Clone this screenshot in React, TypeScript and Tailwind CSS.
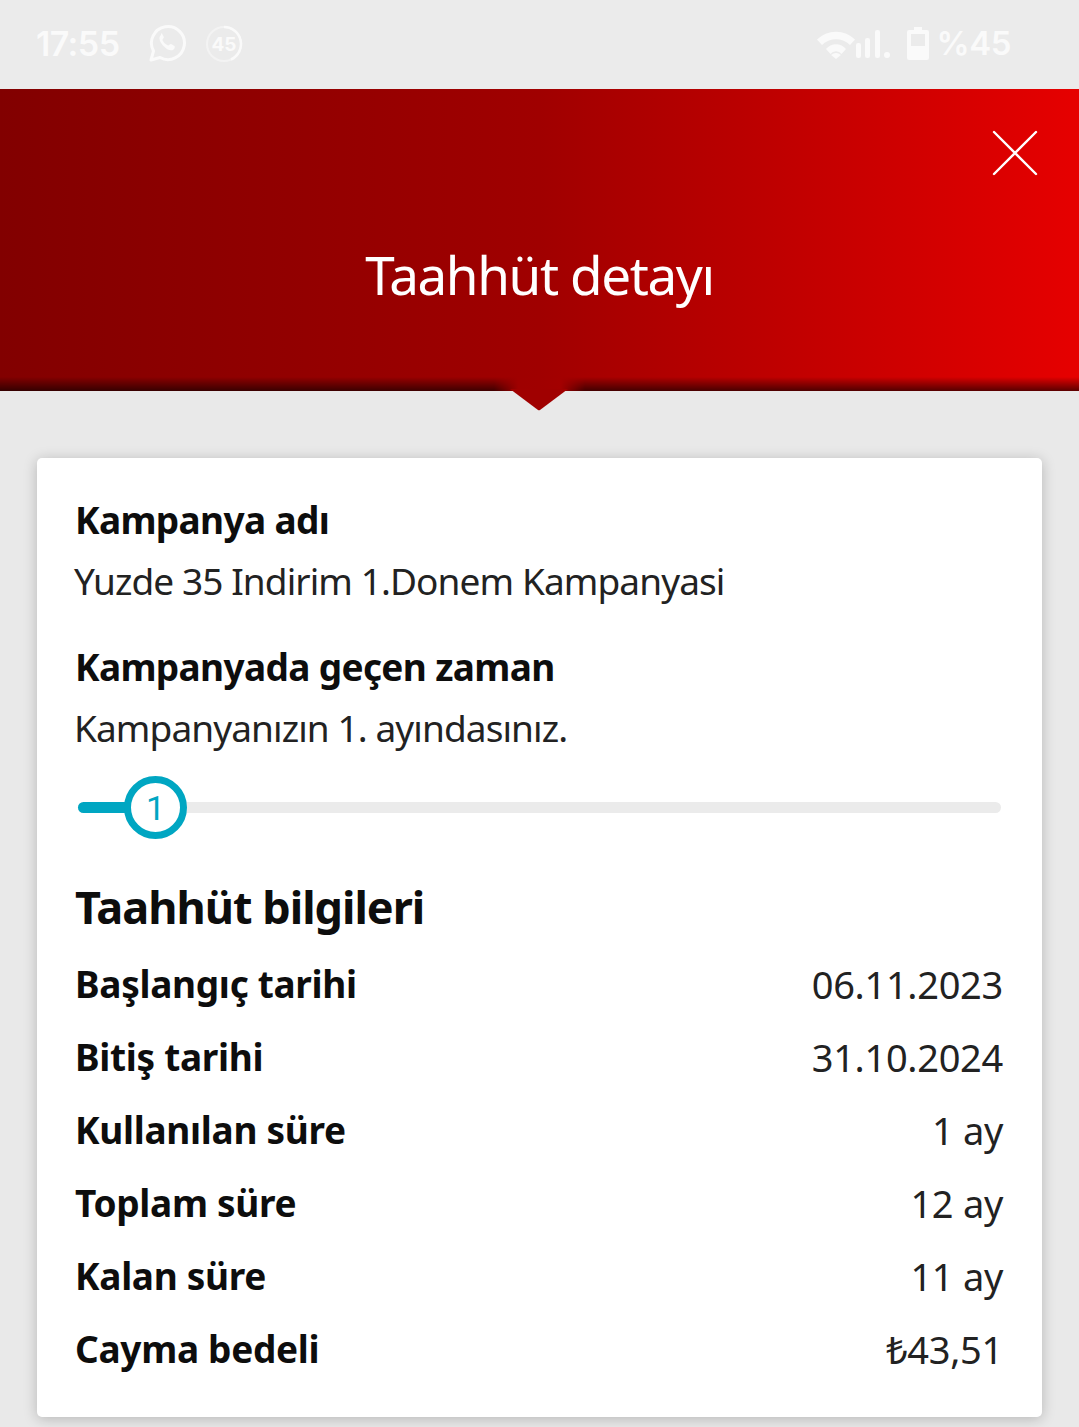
const font = "font-['Noto_Sans','Open_Sans',sans-serif]";
const bold37 = "flex h-[46px] items-center text-[37px] font-bold leading-none tracking-[-0.65px] text-[#0d0d0d]";
const reg37 = "-ml-px flex h-[46px] items-center text-[37px] leading-none tracking-[-0.9px] text-[#222]";

function Row({ label, value }: { label: string; value: string }) {
  return (
    <div className="flex h-[73px] items-center justify-between">
      <span className="text-[37px] font-bold leading-none tracking-[-0.3px] text-[#0d0d0d]">{label}</span>
      <span className="text-[38px] leading-none tracking-[-0.3px] text-[#222]">{value}</span>
    </div>
  );
}

export default function App() {
  return (
    <div className={`${font} flex h-[1427px] w-[1079px] flex-col overflow-hidden bg-[#e9e9e9]`}>
      <div className="flex h-[89px] items-center justify-between bg-[#ebebeb] pb-[2px] pl-[36px] pr-[68px]">
        <div className="flex items-center">
          <span className="w-[84px] font-['Inter',sans-serif] text-[34px] font-semibold leading-none tracking-[-0.6px] text-[#fafafa]">17:55</span>
          <svg className="ml-[28px]" width="38" height="38" viewBox="0 0 38 38" fill="none">
            <path d="M3 35l2.5-9A16.5 16.5 0 1 1 12 32.5z" stroke="#fafafa" strokeWidth="3" strokeLinejoin="round" />
            <path d="M13 10c-2.500 2-2 6 2 10.500s8 6 10.500 4c1.500-1.500 1.500-3 1-3.500l-3.500-2c-1-.3-2 1.700-3 1.500-2-.8-5-3.500-5.500-5.500-.2-1 1.700-2 1.300-3l-1.800-3.500c-.5-.5-1-.5-1 1.500z" fill="#fafafa" />
          </svg>
          <svg className="ml-[19px]" width="38" height="38" viewBox="0 0 38 38" fill="none">
            <circle cx="19" cy="19" r="17" stroke="#f3f3f3" strokeWidth="2" />
            <path d="M19 2A17 17 0 0 1 26 34.500" stroke="#fafafa" strokeWidth="2.500" />
            <text x="19" y="26" textAnchor="middle" fontFamily="Inter" fontWeight="700" fontSize="19" fill="#fafafa">45</text>
          </svg>
        </div>
        <div className="flex items-center">
          <svg width="38" height="30" viewBox="0 0 38 30" className="mr-[1px]">
            <path d="M0 10.500A27 27 0 0 1 38 10.500L33 16A20 20 0 0 0 5 16z M9 20A13 13 0 0 1 29 20L24.500 25A7 7 0 0 0 13.500 25z M14 26A7 7 0 0 1 24 26L19 30z" fill="#fafafa" />
          </svg>
          <svg width="34" height="28" viewBox="0 0 34 28" className="mr-[17px]">
            <rect x="0" y="13" width="5" height="15" rx="2" fill="#fafafa" />
            <rect x="9" y="8" width="5" height="20" rx="2" fill="#fafafa" />
            <rect x="19" y="0" width="5" height="28" rx="2" fill="#fafafa" />
            <rect x="28" y="22" width="6" height="6" rx="3" fill="#fafafa" />
          </svg>
          <svg width="22" height="33" viewBox="0 0 22 33">
            <path fillRule="evenodd" d="M7 0h8v3h5a2 2 0 0 1 2 2v26a2 2 0 0 1-2 2H2a2 2 0 0 1-2-2V5a2 2 0 0 1 2-2h5zM4 7v12h14V7z" fill="#fafafa" />
          </svg>
          <span className="ml-[8px] font-['Inter',sans-serif] text-[33px] font-semibold leading-none tracking-[-0.5px] text-[#fafafa]">%45</span>
        </div>
      </div>

      <div className="relative flex h-[302px] flex-col bg-[linear-gradient(90deg,#820000_0%,#a00000_50%,#e60000_100%)]">
        <div className="absolute inset-x-0 bottom-0 flex h-[14px] gap-[43px]">
          <div className="flex-1 bg-gradient-to-b from-transparent to-black/60 [mask-image:linear-gradient(90deg,#000_calc(100%-24px),transparent)]" />
          <div className="flex-1 bg-gradient-to-b from-transparent to-black/60 [mask-image:linear-gradient(270deg,#000_calc(100%-24px),transparent)]" />
        </div>
        <div className="flex justify-end pr-[41px] pt-[41px]">
          <svg width="46" height="46" viewBox="0 0 46 46">
            <path d="M2 2L44 44M44 2L2 44" stroke="#fff" strokeWidth="2.400" strokeLinecap="round" />
          </svg>
        </div>
        <div className="mt-[63px] text-center text-[53px] leading-[72px] tracking-[-1.4px] text-white">
          Taahhüt detayı
        </div>
        <svg className="absolute left-[509px] top-[298px] blur-[0.7px]" width="60" height="24" viewBox="0 0 60 24">
          <path d="M1 2H59L31 23Q30 23.500 29 23z" fill="#a00000" />
        </svg>
      </div>

      <div className="mx-[37px] mt-[67px] flex h-[959px] flex-col rounded-[5px] bg-white pl-[38px] pr-[39px] pt-[38px] shadow-[0_2px_14px_rgba(0,0,0,0.22)]">
        <div className={bold37}>Kampanya adı</div>
        <div className={`${reg37} mt-[15px]`}>Yuzde 35 Indirim 1.Donem Kampanyasi</div>
        <div className={`${bold37} mt-[40px]`}>Kampanyada geçen zaman</div>
        <div className={`${reg37} mt-[15px]`}>Kampanyanızın 1. ayındasınız.</div>

        <div className="relative ml-[3px] mr-[2px] mt-[52px] h-[11px] rounded-full bg-[#ebebeb]">
          <div className="h-full w-[70px] rounded-full bg-[#00a6c2]" />
          <div className="absolute left-[46px] top-[-26px] flex h-[63px] w-[63px] items-center justify-center rounded-full border-[7px] border-[#00a6c2] bg-white font-['Roboto',sans-serif] text-[34px] font-normal leading-none text-[#00a6c2]">1</div>
        </div>

        <div className="mt-[63px] flex h-[60px] items-center text-[45px] font-bold leading-none tracking-[-1px] text-[#0d0d0d]">Taahhüt bilgileri</div>
        <div className="mt-[11px] flex flex-col">
          <Row label="Başlangıç tarihi" value="06.11.2023" />
          <Row label="Bitiş tarihi" value="31.10.2024" />
          <Row label="Kullanılan süre" value="1 ay" />
          <Row label="Toplam süre" value="12 ay" />
          <Row label="Kalan süre" value="11 ay" />
          <Row label="Cayma bedeli" value="₺43,51" />
        </div>
      </div>
    </div>
  );
}
